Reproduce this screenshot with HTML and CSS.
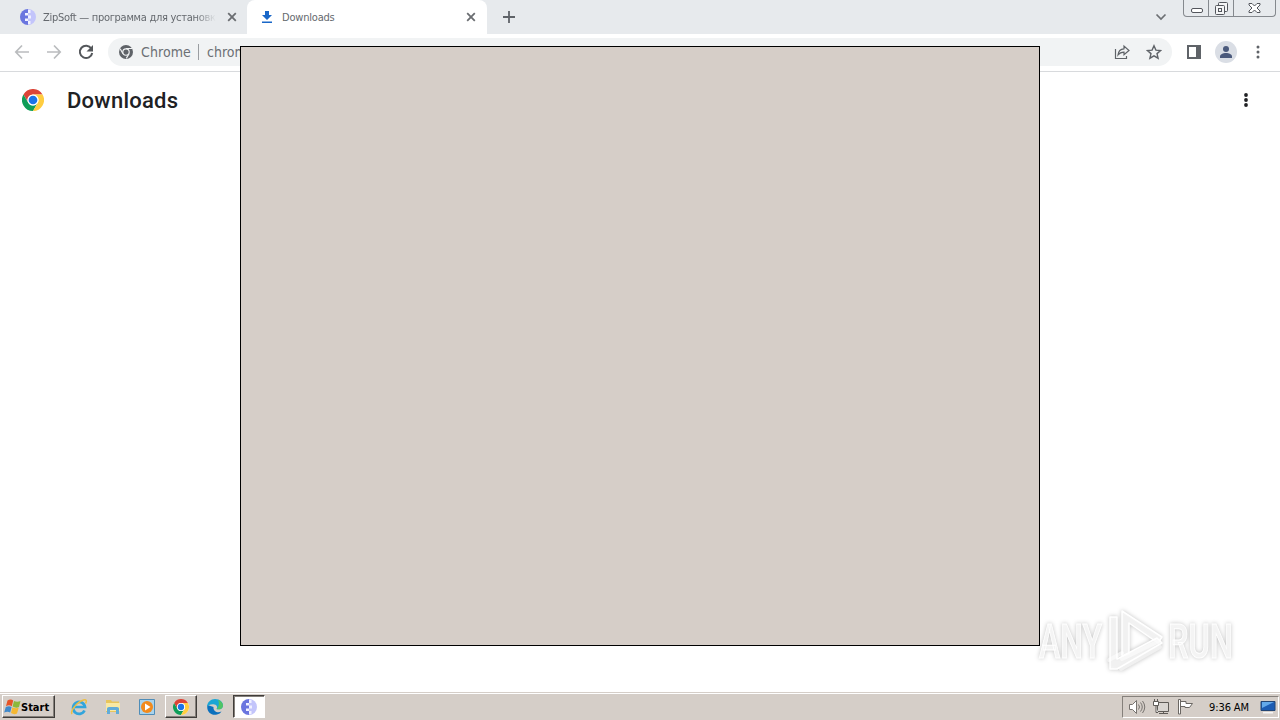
FILE: index.html
```html
<!DOCTYPE html>
<html lang="en">
<head>
    <meta charset="UTF-8">
    <meta name="viewport" content="width=device-width, initial-scale=1.0">
    <title>Downloads</title>
    <link rel="stylesheet" href="styles.css">
</head>
<body>
    <svg class="defs" width="0" height="0">
        <symbol id="chrome" viewBox="0 0 48 48">
            <circle cx="24" cy="24" r="24" fill="#fff"/>
            <path fill="#db4437" d="M3.2 12A24 24 0 0 1 44.8 12H24A12 12 0 0 0 13.6 30z"/>
            <path fill="#0f9d58" d="M3.2 12L13.6 30A12 12 0 0 0 34.4 30L24 48A24 24 0 0 1 3.2 12z"/>
            <path fill="#ffcd40" d="M44.8 12H24A12 12 0 0 1 34.4 30L24 48A24 24 0 0 0 44.8 12z"/>
            <circle cx="24" cy="24" r="12" fill="#fff"/>
            <circle cx="24" cy="24" r="9.5" fill="#1a73e8"/>
        </symbol>
        <symbol id="zipsoft" viewBox="0 0 16 16">
            <path fill="#6a75df" d="M8 0A8 8 0 0 0 8 16z"/>
            <path fill="#c3c5fb" d="M8 0A8 8 0 0 1 8 16z"/>
            <path fill="#f1f2ff" d="M5 4h3v2.500H5zM5 9.500h3V12H5zM8 1h2.500v3H8zM8 6.500h3v3H8zM8 12h2.500v3H8z"/>
        </symbol>
        <symbol id="close" viewBox="0 0 10 10">
            <path d="M1.2 1.2l7.6 7.6M8.8 1.2L1.2 8.8" stroke="#6a6d71" stroke-width="1.8"/>
        </symbol>
    </svg>

    <div class="tabstrip">
        <div class="tab">
            <svg class="tab-icon" width="16" height="16"><use href="#zipsoft"/></svg>
            <span class="tab-title tab-title-fade">ZipSoft — программа для установки</span>
            <svg class="tab-close" width="10" height="10"><use href="#close"/></svg>
        </div>
        <div class="tab tab-active">
            <svg class="tab-icon" width="16" height="16" viewBox="0 0 16 16"><path fill="#1967c8" d="M6 2h4v4h3L8 11 3 6h3zM3 12.500h10v1.600H3z"/></svg>
            <span class="tab-title">Downloads</span>
            <svg class="tab-close" width="10" height="10"><use href="#close"/></svg>
        </div>
        <svg class="new-tab" width="14" height="14" viewBox="0 0 14 14"><path d="M7 1v12M1 7h12" stroke="#5f6368" stroke-width="1.8"/></svg>
        <svg class="tab-search" width="12" height="8" viewBox="0 0 12 8"><path d="M1.5 1.5L6 6l4.500-4.500" fill="none" stroke="#6c6f73" stroke-width="1.7"/></svg>
        <div class="window-buttons">
            <div class="win-btn"><svg width="13" height="17" viewBox="0 0 13 17"><rect x="1.500" y="8.500" width="11" height="4" rx="1.500" fill="#fff" stroke="#53565c"/></svg></div>
            <div class="win-btn"><svg width="13" height="17" viewBox="0 0 13 17"><g fill="#f4f5f6" stroke="#53565c"><rect x="3.500" y="2.500" width="9" height="9" rx="1"/><rect x=".5" y="5.500" width="9" height="9" rx="1"/><rect x="3.500" y="8.500" width="3" height="3"/></g></svg></div>
            <div class="win-btn win-close"><svg width="13" height="17" viewBox="0 0 13 17"><path d="M1 3.500h3l2.500 2.500L9 3.500h3v1.500L9 8l3 3v1.500H9L6.500 10 4 12.500H1V11l3-3-3-3z" fill="#fff" stroke="#53565c"/></svg></div>
        </div>
    </div>

    <div class="toolbar">
        <div class="nav-buttons">
            <svg width="16" height="16" viewBox="0 0 16 16"><path d="M15 8H2M8 1.500L1.800 8 8 14.500" fill="none" stroke="#babcbe" stroke-width="1.700"/></svg>
            <svg width="16" height="16" viewBox="0 0 16 16"><path d="M1 8h13M8 1.500L14.200 8 8 14.500" fill="none" stroke="#babcbe" stroke-width="1.700"/></svg>
            <svg width="16" height="16" viewBox="0 0 16 16"><path d="M13.300 4.500A6.200 6.200 0 1 0 14.200 9" fill="none" stroke="#54575b" stroke-width="2"/><path d="M15 1v6.500H8.500z" fill="#54575b"/></svg>
        </div>
        <div class="omnibox">
            <svg width="14" height="14" viewBox="0 0 48 48"><circle cx="24" cy="24" r="24" fill="#5f6368"/><circle cx="24" cy="24" r="11" fill="none" stroke="#f1f3f4" stroke-width="4"/><path d="M24 12h21M13.600 30L4 13M34.400 30L25 46" stroke="#f1f3f4" stroke-width="4"/></svg>
            <span class="omnibox-chip">Chrome</span>
            <span class="omnibox-url">chrome://downloads</span>
            <svg class="share" width="16" height="16" viewBox="0 0 16 16"><path d="M1.500 5v9.500h11V12M4 11c.4-4 2.500-6 6-6.200V2l5 4.500-5 4.300V8.200C7.500 8.200 5.500 9 4 11z" fill="none" stroke="#5f6368" stroke-width="1.200"/></svg>
            <svg width="16" height="16" viewBox="0 0 16 16"><path d="M8 1.800l1.900 4.300 4.700.4-3.600 3.100 1.100 4.600L8 11.800l-4.100 2.400L5 9.600 1.400 6.500l4.700-.4z" fill="none" stroke="#5f6368" stroke-width="1.400"/></svg>
        </div>
        <svg class="side-panel" width="14" height="14" viewBox="0 0 14 14"><path fill="#5f6368" fill-rule="evenodd" d="M0 0h14v14H0zM2 2v10h7V2z"/></svg>
        <svg class="avatar" width="22" height="22" viewBox="0 0 22 22"><circle cx="11" cy="11" r="11" fill="#dadee5"/><circle cx="11" cy="8" r="3" fill="#4b5a7c"/><path fill="#4b5a7c" d="M5 17v-1.500c0-2 3-3.500 6-3.500s6 1.500 6 3.500V17z"/></svg>
        <svg class="menu-dots" width="4" height="14" viewBox="0 0 4 14"><g fill="#5f6368"><circle cx="2" cy="2" r="1.500"/><circle cx="2" cy="7" r="1.500"/><circle cx="2" cy="12" r="1.500"/></g></svg>
    </div>

    <div class="page">
        <div class="page-header">
            <svg width="22" height="22"><use href="#chrome"/></svg>
            <h1>Downloads</h1>
            <svg class="more" width="4" height="14" viewBox="0 0 4 14"><g fill="#202124"><circle cx="2" cy="2" r="1.900"/><circle cx="2" cy="7" r="1.900"/><circle cx="2" cy="12" r="1.900"/></g></svg>
        </div>
    </div>

    <div class="taskbar">
        <div class="start">
            <svg width="17" height="16" viewBox="0 0 17 16"><path fill="#e65427" d="M3.500 1.500c2-1.500 4.500-1.200 5.700 0L7.800 7.200C6 6 4 6 2 7.200z"/><path fill="#8cb83b" d="M10 2c2 1 4.500 1 6.500 0L15 8c-2 1-4.500.8-6.400-.5z"/><path fill="#4089cb" d="M1.800 8C4 7 6 7 7.600 8L6.200 13.500C4.500 12.400 2.500 12.400.2 13.500z"/><path fill="#f5b832" d="M8.400 8.300c2 1 4 1.200 6.300.5L13 14.500c-2 1-4 .8-6-.5z"/></svg>
            <span>Start</span>
        </div>
        <div class="quick-launch">
            <div class="task"><svg width="18" height="18" viewBox="0 0 18 18"><path d="M14.500 12.500A6 6 0 1 1 15 9H5" fill="none" stroke="#32a5dc" stroke-width="2.700"/><path d="M2 16C0 13 7 4 13.500 2c3-.8 3.500 1 2 3.500" fill="none" stroke="#edbe42" stroke-width="1.500"/></svg></div>
            <div class="task"><svg width="16" height="16" viewBox="0 0 16 16"><path fill="#e8c55d" d="M1 1h5l1 1.500h7V13H1z"/><path fill="#f9e9a4" d="M1 4h14v8H1z"/><path fill="#62acd9" d="M2 9.500q0-1.500 2-1.500h8q2 0 2 1.500V15h-3v-4H5v4H2z"/></svg></div>
            <div class="task"><svg width="16" height="16" viewBox="0 0 16 16"><path fill="#a9d3ec" stroke="#4f8db8" d="M.5.5h15v15H.5z"/><circle cx="8" cy="8" r="6" fill="#f28a1c"/><path fill="#fff" d="M6 4.500L11.500 8 6 11.500z"/></svg></div>
            <div class="task task-open"><svg width="16" height="16"><use href="#chrome"/></svg></div>
            <div class="task"><svg width="16" height="16" viewBox="0 0 16 16"><path fill="#0b70bd" d="M.5 6C-1 12 4 17 10 15.500c2-.4 3.500-1.500 4.500-3C10 14.500 6 12 6.500 8z"/><path fill="#1aa6d4" d="M0 8C0 3 4 0 8 0c5 0 8 3 8 6.500S12 11 9.500 10c1-1 1-4-2-4.500C4 5 1 6 0 8z"/><path fill="#50c464" d="M11 .7c3 1 5 3.500 5 5.800C16 10 12 11 9.500 10c2.500-2 3-6 1.500-9.300z"/></svg></div>
            <div class="task task-active"><svg width="16" height="16"><use href="#zipsoft"/></svg></div>
        </div>
        <div class="tray">
            <svg width="18" height="16" viewBox="0 0 18 16"><path d="M1.500 5.500h3l4-4v13l-4-4h-3z" fill="#fff" stroke="#77736f"/><path d="M10.500 5.500q2 2.500 0 5M12.500 3.500q3.500 4.500 0 9M14.500 2q4.500 6 0 12" fill="none" stroke="#77736f"/></svg>
            <svg width="17" height="16" viewBox="0 0 17 16"><path d="M4.500 3.500h11v9h-11zM6 14.500h9M10.500 13v1" fill="#d9d5d1" stroke="#5f5b57"/><path d="M.5 2.500h5v4h-5zM1.500 0v2M4.500 0v2M3 7v6.500h2" fill="#fff" stroke="#5f5b57"/></svg>
            <svg width="17" height="16" viewBox="0 0 17 16"><path d="M1.500 15V.5h2V15zM3.500 2.500H9v2h6.500l-3 4H8v-1H3.500z" fill="#fff" stroke="#6b6763"/></svg>
            <span class="clock">9:36 AM</span>
            <svg width="16" height="16" viewBox="0 0 16 16"><path fill="#1c5cb3" stroke="#234675" d="M1 2.500h14v9H1z"/><path fill="#63a9ea" d="M2 3h12L2 9z"/><path fill="#f4f4f4" d="M3 13h10v1.500H3z"/></svg>
        </div>
    </div>

    <div class="dialog"></div>

    <svg class="watermark" width="230" height="90" viewBox="0 0 230 90">
        <g class="watermark-text">
            <text x="9" y="59" textLength="63" lengthAdjust="spacingAndGlyphs">ANY</text>
            <text x="138" y="59" textLength="65" lengthAdjust="spacingAndGlyphs">RUN</text>
        </g>
        <path class="watermark-lower" d="M92 60l37-18M79 61l13-7M91 70l39-22"/>
        <g class="watermark-logo">
            <path d="M92 57V12l40 26-4 6-29-20v31z"/>
            <path d="M80 18h7v42l40-21 5 5-45 26h-7z"/>
        </g>
    </svg>
</body>
</html>
```
FILE: styles.css
```css
* {
    margin: 0;
    padding: 0;
    box-sizing: border-box;
}

body {
    width: 1280px;
    height: 720px;
    overflow: hidden;
    display: flex;
    flex-direction: column;
    background: #fff;
    font-family: "DejaVu Sans Condensed", "DejaVu Sans", sans-serif;
    font-stretch: condensed;
}

svg {
    display: block;
    flex-shrink: 0;
}

.defs {
    position: absolute;
}

.tabstrip {
    height: 34px;
    background: #e7eaed;
    display: flex;
    align-items: center;
    padding-left: 8px;
}

.tab {
    width: 239px;
    height: 34px;
    display: flex;
    align-items: center;
    padding: 0 10px 0 12px;
}

.tab-active {
    width: 240px;
    padding-right: 11px;
    background: #fff;
    border-radius: 8px 8px 0 0;
}

.tab-title {
    flex: 1;
    min-width: 0;
    margin: 0 11px 0 7px;
    overflow: hidden;
    white-space: nowrap;
    font-size: 11px;
    letter-spacing: -0.2px;
    color: #65696e;
}

.tab-title-fade {
    letter-spacing: -0.28px;
    -webkit-mask-image: linear-gradient(to right, #000 88%, transparent);
    mask-image: linear-gradient(to right, #000 88%, transparent);
}

.new-tab {
    margin-left: 15px;
}

.tab-search {
    margin-left: auto;
    margin-right: 16px;
}

.window-buttons {
    display: flex;
    align-self: flex-start;
    height: 17px;
    margin-right: 4px;
    border: 1px solid #85898e;
    border-top: none;
    border-radius: 0 0 4px 4px;
}

.win-btn {
    width: 25px;
    display: flex;
    justify-content: center;
    border-right: 1px solid #85898e;
}

.win-close {
    width: 41px;
    border-right: none;
}

.toolbar {
    height: 38px;
    display: flex;
    align-items: center;
    padding: 0 20px 1px 14px;
    border-bottom: 1px solid #d8dadd;
}

.nav-buttons {
    display: flex;
    gap: 16px;
}

.omnibox {
    width: 1064px;
    height: 28px;
    margin-left: 14px;
    padding: 0 10px 0 11px;
    border-radius: 14px;
    background: #f1f3f4;
    display: flex;
    align-items: center;
    font-size: 14px;
    color: #6c7075;
}

.omnibox-chip {
    margin-left: 8px;
    padding-right: 7px;
    line-height: 16px;
    border-right: 1px solid #9a9da1;
    letter-spacing: 0.1px;
}

.omnibox-url {
    margin-left: 8px;
}

.share {
    margin-left: auto;
    margin-right: 16px;
}

.side-panel {
    margin-left: 15px;
}

.avatar {
    margin-left: 14px;
}

.menu-dots {
    margin-left: auto;
}

.page {
    flex: 1;
}

.page-header {
    height: 56px;
    display: flex;
    align-items: center;
    padding: 0 32px 0 22px;
}

.page-header h1 {
    margin-left: 23px;
    font-family: Roboto, sans-serif;
    font-stretch: normal;
    font-size: 22px;
    font-weight: 500;
    letter-spacing: 0.25px;
    color: #202124;
}

.more {
    margin-left: auto;
}

.taskbar {
    height: 28px;
    display: flex;
    align-items: center;
    padding: 0 1px 0 2px;
    border-top: 1px solid #d5cec8;
    background: #d5cec8;
    box-shadow: inset 0 1px 0 #fff;
}

.start {
    width: 53px;
    height: 23px;
    display: flex;
    align-items: center;
    padding-left: 1px;
    border: 1px solid;
    border-color: #fff #403d3a #403d3a #fff;
    box-shadow: inset -1px -1px 0 #85807b;
    font-size: 11px;
    font-weight: bold;
    color: #000;
}

.start span {
    padding-top: 1px;
}

.quick-launch {
    display: flex;
    gap: 2px;
    margin-left: 8px;
}

.task {
    width: 32px;
    height: 23px;
    display: flex;
    align-items: center;
    justify-content: center;
}

.task-open {
    border: 1px solid;
    border-color: #fff #403d3a #403d3a #fff;
    box-shadow: inset -1px -1px 0 #85807b;
}

.task-active {
    background: #fff;
    border: 1px solid;
    border-color: #403d3a #fff #fff #403d3a;
    box-shadow: inset 1px 1px 0 #85807b;
}

.tray {
    width: 157px;
    height: 22px;
    margin-left: auto;
    padding-left: 5px;
    display: flex;
    align-items: center;
    gap: 7px;
    border: 1px solid;
    border-color: #85807b #fff #fff #85807b;
}

.clock {
    margin-left: 8px;
    padding-top: 1px;
    width: 44px;
    white-space: nowrap;
    font-size: 11px;
    letter-spacing: -0.1px;
    color: #000;
}

.dialog {
    position: absolute;
    left: 240px;
    top: 46px;
    width: 800px;
    height: 600px;
    background: #d6cec8;
    border: 1px solid #000;
}

.watermark {
    position: absolute;
    left: 1030px;
    top: 599px;
    filter: drop-shadow(0 0 2px rgba(0, 0, 0, 0.25));
}

.watermark-text {
    font-family: Roboto, sans-serif;
    font-stretch: normal;
    font-size: 49px;
    font-weight: 500;
    fill: rgba(247, 247, 247, 0.9);
    stroke: #fff;
    stroke-width: 1;
}

.watermark-logo {
    fill: rgba(250, 250, 250, 0.8);
    stroke: #fff;
    stroke-width: 1.5;
    stroke-linejoin: round;
}

.watermark-lower {
    fill: none;
    stroke: #f0f0f0;
    stroke-width: 4;
    stroke-linecap: round;
}
```
